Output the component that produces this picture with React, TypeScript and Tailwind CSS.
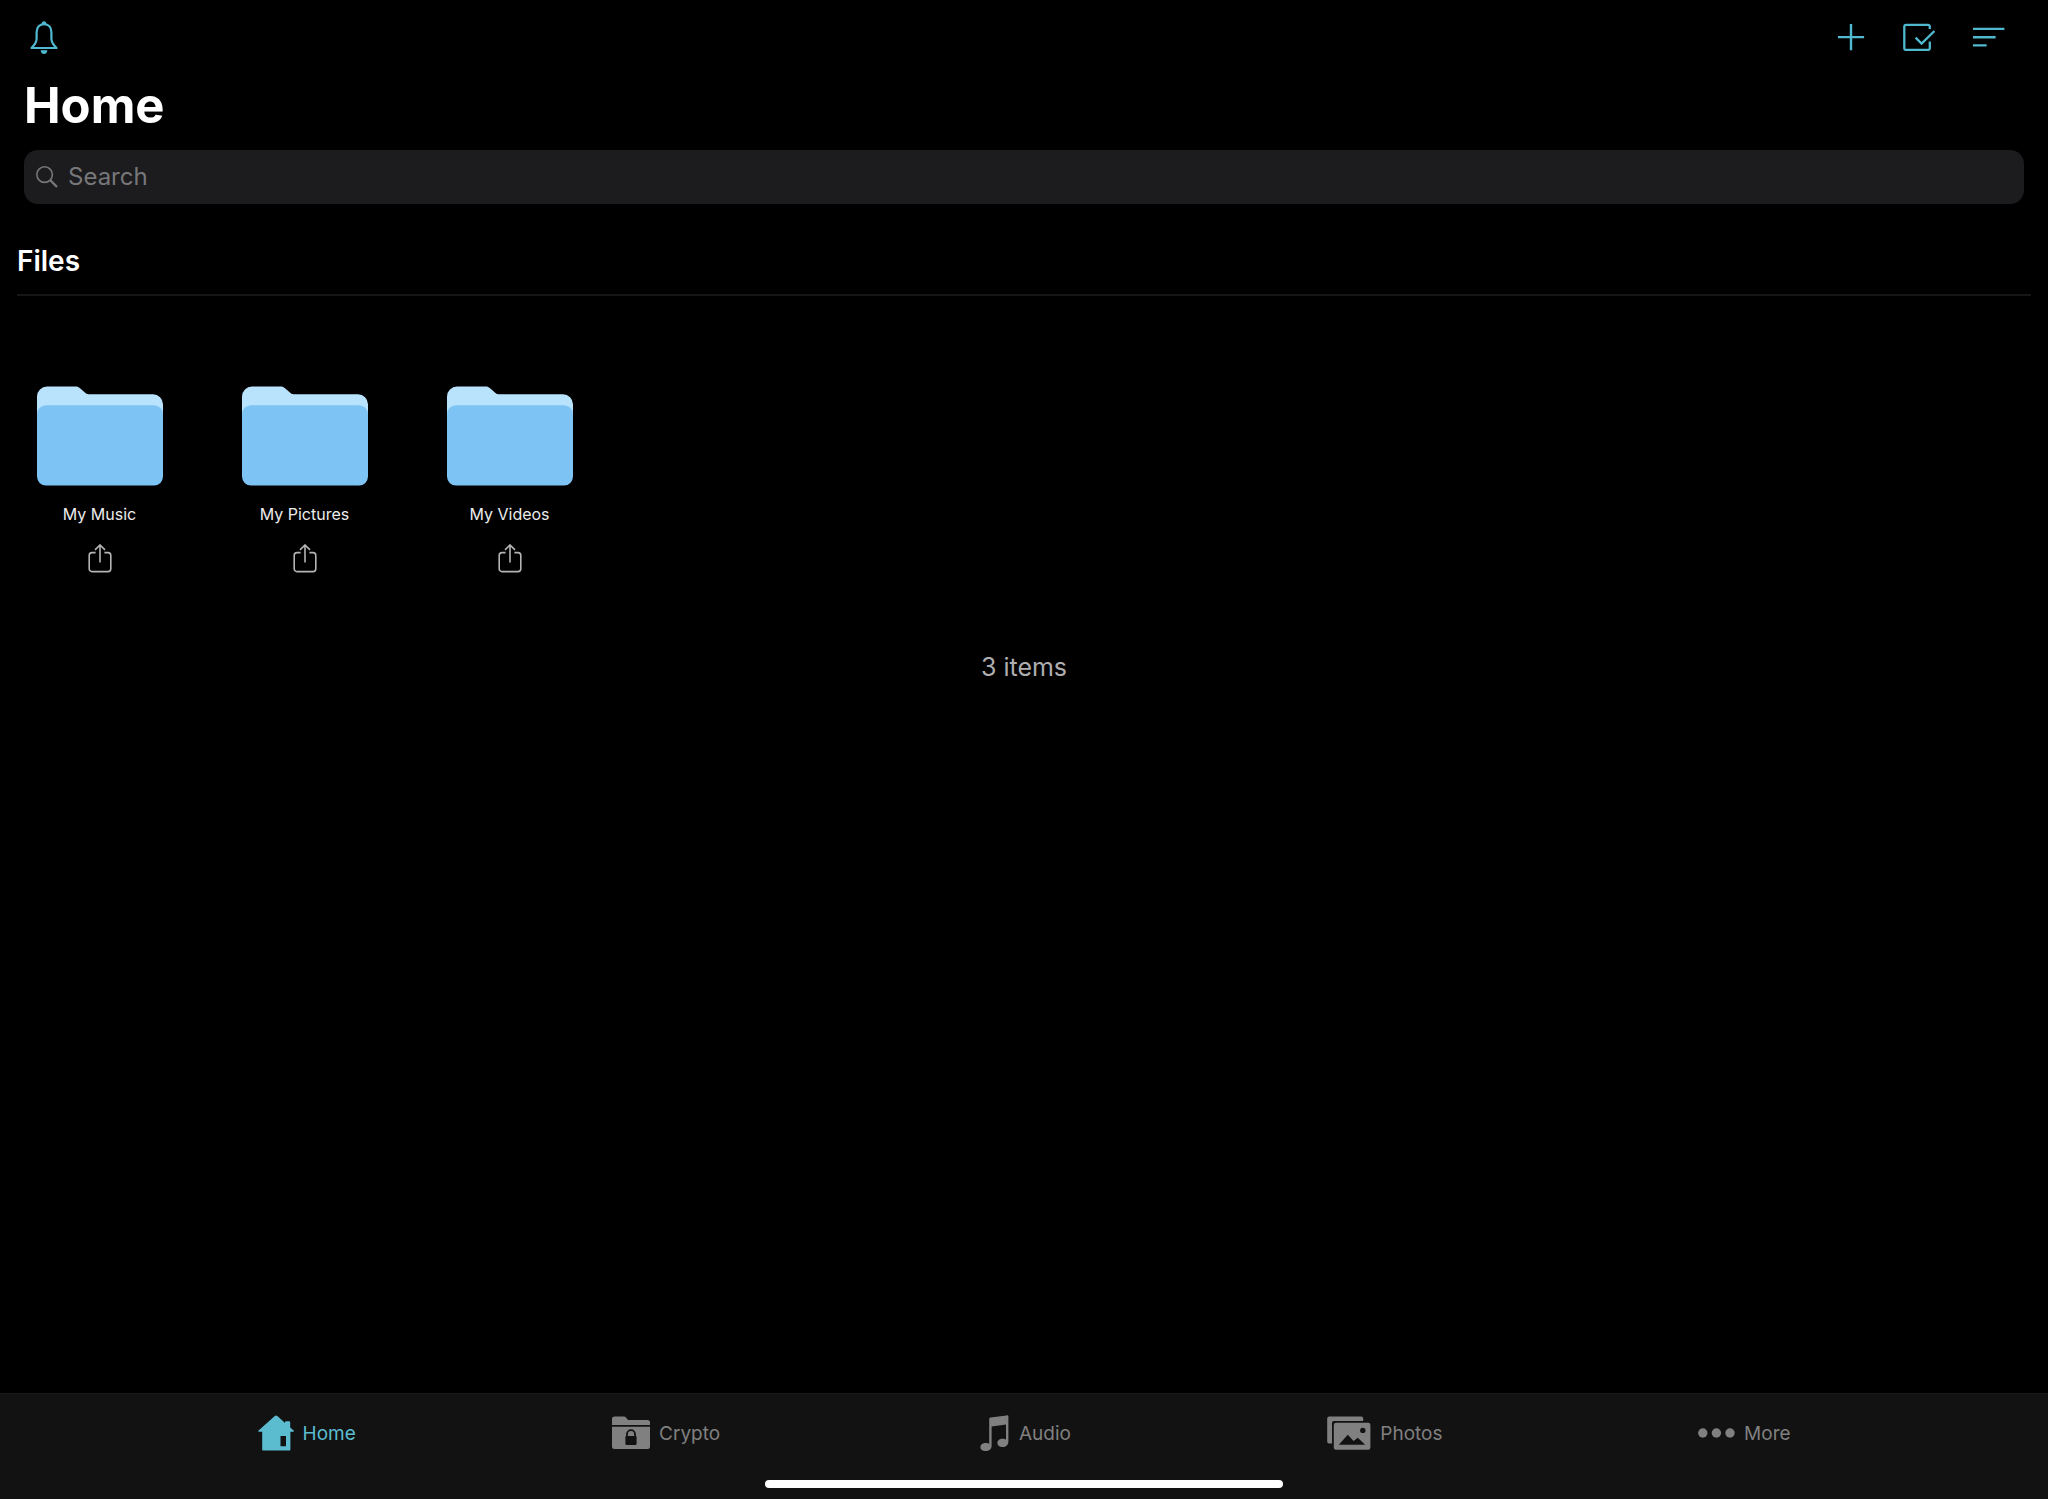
import type { ReactNode } from 'react';

interface Folder {
  id: string;
  name: string;
}

interface Tab {
  id: string;
  label: string;
  icon: ReactNode;
}

const folders: Folder[] = [
  { id: 'music', name: 'My Music' },
  { id: 'pictures', name: 'My Pictures' },
  { id: 'videos', name: 'My Videos' },
];

function BellIcon() {
  return (
    <svg width="28" height="34" viewBox="0 0 28 34" fill="none" stroke="currentColor" strokeWidth="2.2" strokeLinejoin="round">
      <path d="M1.5 28C4.6 25 6.6 22.4 6.6 18.8V12.2C6.6 7.3 9.6 4.1 14 4.1S21.4 7.3 21.4 12.2V18.8C21.4 22.4 23.4 25 26.5 28Z" />
      <path d="M11.6 4.1C11.8 2 12.8 1.3 14 1.3S16.2 2 16.4 4.1Z" fill="currentColor" stroke="none" />
      <path d="M10.6 30.2H17.4C17.2 32.6 16 34 14 34S10.8 32.6 10.6 30.2Z" fill="currentColor" stroke="none" />
    </svg>
  );
}

function PlusIcon() {
  return (
    <svg width="28" height="28" viewBox="0 0 28 28" fill="none" stroke="currentColor" strokeWidth="2.4">
      <path d="M14 1V27.2M.9 14.1H27.1" />
    </svg>
  );
}

function SelectIcon() {
  return (
    <svg width="32" height="28" viewBox="0 0 32 28" fill="none" stroke="currentColor" strokeWidth="2.3">
      <path d="M26.8 6V3.6A1.7 1.7 0 0 0 25.1 1.9H3A1.7 1.7 0 0 0 1.3 3.6V25.2A1.7 1.7 0 0 0 3 26.9H25.1A1.7 1.7 0 0 0 26.8 25.2V18.6" />
      <path d="M12.6 14.6L18.6 20.6L31.4 8" />
    </svg>
  );
}

function SortIcon() {
  return (
    <svg width="32" height="20" viewBox="0 0 32 20" fill="none" stroke="currentColor" strokeWidth="2.4">
      <path d="M0 1.9H31.4M0 10.2H22.6M0 18.4H13.6" />
    </svg>
  );
}

function SearchIcon() {
  return (
    <svg width="22" height="22" viewBox="0 0 22 22" fill="none" stroke="currentColor">
      <circle cx="8.6" cy="8.6" r="7.8" strokeWidth="1.6" />
      <path d="M14.2 14.2L21 21" strokeWidth="2.4" />
    </svg>
  );
}

function FolderIcon() {
  return (
    <svg width="126" height="100" viewBox="0 0 126 100">
      <path d="M0 10.5A10 10 0 0 1 10 .5H38.5C40.5.5 41.7 1 43 2.2L48.5 7.1C49.5 8 50 8.2 51.5 8.2H116A10 10 0 0 1 126 18.2V60H0Z" fill="#b9e2fc" />
      <rect y="19.2" width="126" height="80.4" rx="9" fill="#7dc4f5" />
    </svg>
  );
}

function ShareIcon() {
  return (
    <svg width="24" height="30" viewBox="0 0 24 30" fill="none" stroke="currentColor" strokeWidth="1.6">
      <path d="M7.6 8.6H4A2.8 2.8 0 0 0 1.2 11.4V24.8A2.8 2.8 0 0 0 4 27.6H20A2.8 2.8 0 0 0 22.8 24.8V11.4A2.8 2.8 0 0 0 20 8.6H16.4" />
      <path d="M12 18.6V1.2M7 5.9L12 1L17 5.9" />
    </svg>
  );
}

function HomeIcon() {
  return (
    <svg width="36" height="36" viewBox="0 0 36 36" fill="currentColor">
      <path
        fillRule="evenodd"
        d="M16.8 1.1C17.6.4 18.6.4 19.4 1.1L27 8V7.6C27 6.8 27.5 6.3 28.3 6.3H30.9C31.7 6.3 32.2 6.8 32.2 7.6V12.4L35.6 15.6C36.2 16.2 36 16.7 35.2 16.7H32.4V34.4C32.4 35.2 32 35.6 31.2 35.6H5.4C4.6 35.6 4.2 35.2 4.2 34.4V16.7H1C.1 16.7 0 16.1.6 15.6ZM22.5 21V31.2H28V21Z"
      />
    </svg>
  );
}

function CryptoIcon() {
  return (
    <svg width="38" height="34" viewBox="0 0 38 34" fill="currentColor">
      <path d="M0 9V3A2.5 2.5 0 0 1 2.5.5H11.5C12.6.5 13.3.8 14 1.6L16 4H35.5A2.5 2.5 0 0 1 38 6.5V9Z" />
      <path d="M0 10.8H38V30.5A2.5 2.5 0 0 1 35.5 33H2.5A2.5 2.5 0 0 1 0 30.5Z" />
      <path d="M15 21V18.2A4 4 0 0 1 23 18.2V21" fill="none" stroke="#121212" strokeWidth="1.8" />
      <rect x="13.4" y="20" width="11.2" height="9" rx="1.2" fill="#121212" />
    </svg>
  );
}

function AudioIcon() {
  return (
    <svg width="30" height="36" viewBox="0 0 30 36" fill="currentColor">
      <path d="M9.2 4.2C9.2 3.2 9.7 2.8 10.6 2.6L26.6.4C27.8.2 28.4.6 28.4 1.6V26.5C28.4 30 26 32 22.5 32S17.4 30 17.4 28C17.4 25.2 20 23.8 22.6 23.8C24.2 23.8 25.2 24.2 26 24.8V9.6L11.6 11.4V31C11.6 34 9 36 5.6 36S.4 34.4.4 32.2C.4 29.4 3 28 5.6 28C7.2 28 8.4 28.4 9.2 29Z" />
    </svg>
  );
}

function PhotosIcon() {
  return (
    <svg width="44" height="34" viewBox="0 0 44 34" fill="currentColor">
      <path d="M2.2.5H34.2A2 2 0 0 1 36.2 2.5V5H7A2 2 0 0 0 5 7V27.5H2.2A2 2 0 0 1 .2 25.5V2.5A2 2 0 0 1 2.2.5Z" />
      <rect x="6.8" y="6.8" width="36.6" height="27" rx="2.2" />
      <circle cx="35.8" cy="14.4" r="2.7" fill="#121212" />
      <path d="M11.8 28.8L20.8 18.8L26.6 25L30.8 21.8L38.2 28.8Z" fill="#121212" />
    </svg>
  );
}

function MoreIcon() {
  return (
    <svg width="37" height="10" viewBox="0 0 37 10" fill="currentColor">
      <circle cx="4.8" cy="5" r="4.7" />
      <circle cx="18.4" cy="5" r="4.7" />
      <circle cx="32" cy="5" r="4.7" />
    </svg>
  );
}

const tabs: Tab[] = [
  { id: 'home', label: 'Home', icon: <HomeIcon /> },
  { id: 'crypto', label: 'Crypto', icon: <CryptoIcon /> },
  { id: 'audio', label: 'Audio', icon: <AudioIcon /> },
  { id: 'photos', label: 'Photos', icon: <PhotosIcon /> },
  { id: 'more', label: 'More', icon: <MoreIcon /> },
];

export default function App() {
  const activeTab = 'home';

  return (
    <div className="flex min-h-screen flex-col bg-black font-['Inter',sans-serif] text-white">
      <header className="px-6">
        <div className="flex h-[74px] items-center justify-between pr-[19px] pl-[6px] text-[#50b9cf]">
          <button type="button" aria-label="Notifications">
            <BellIcon />
          </button>
          <div className="flex items-center gap-[38px]">
            <button type="button" aria-label="Add">
              <PlusIcon />
            </button>
            <button type="button" aria-label="Select">
              <SelectIcon />
            </button>
            <button type="button" aria-label="Sort">
              <SortIcon />
            </button>
          </div>
        </div>
        <h1 className="text-[49px] leading-[64px] font-bold">Home</h1>
        <label className="mt-3 flex h-[54px] items-center gap-[10px] rounded-[14px] bg-[#1c1c1e] px-3 text-[#77777a]">
          <SearchIcon />
          <input
            type="search"
            aria-label="Search"
            placeholder="Search"
            className="min-w-0 flex-1 bg-transparent text-[24px] leading-8 outline-none placeholder:text-[#77777a]"
          />
        </label>
      </header>

      <main className="flex-1 px-[17px]">
        <h2 className="mt-[39px] border-b-2 border-[#161616] pb-[15px] text-[28px] leading-9 font-semibold">Files</h2>
        <ul className="mt-[90px] flex flex-wrap gap-10">
          {folders.map((folder) => (
            <li key={folder.id} className="flex w-[165px] flex-col items-center">
              <button type="button" className="flex flex-col items-center gap-4">
                <FolderIcon />
                <span className="text-[16px] leading-6 text-[#ececec]">{folder.name}</span>
              </button>
              <button type="button" aria-label={`Share ${folder.name}`} className="mt-[18px] text-[#b4b4b4]">
                <ShareIcon />
              </button>
            </li>
          ))}
        </ul>
        <p className="mt-[77px] text-center text-[25px] leading-8 text-[#aeaeb0]">{folders.length} items</p>
      </main>

      <footer className="border-t border-[#1a1a1a] bg-[#121212]">
        <nav className="mx-auto flex h-20 max-w-[1800px] pl-[3px]">
          {tabs.map((tab) => (
            <a
              key={tab.id}
              href={`#${tab.id}`}
              className={`flex flex-1 items-center justify-center gap-[9px] text-[19px] leading-6 ${
                tab.id === activeTab ? 'text-[#5bbcd0]' : 'text-[#808080]'
              }`}
            >
              <span className="pb-[3px]">{tab.icon}</span>
              <span>{tab.label}</span>
            </a>
          ))}
        </nav>
        <div className="mx-auto mt-[6px] mb-[11px] h-2 w-[518px] rounded-full bg-white" />
      </footer>
    </div>
  );
}
